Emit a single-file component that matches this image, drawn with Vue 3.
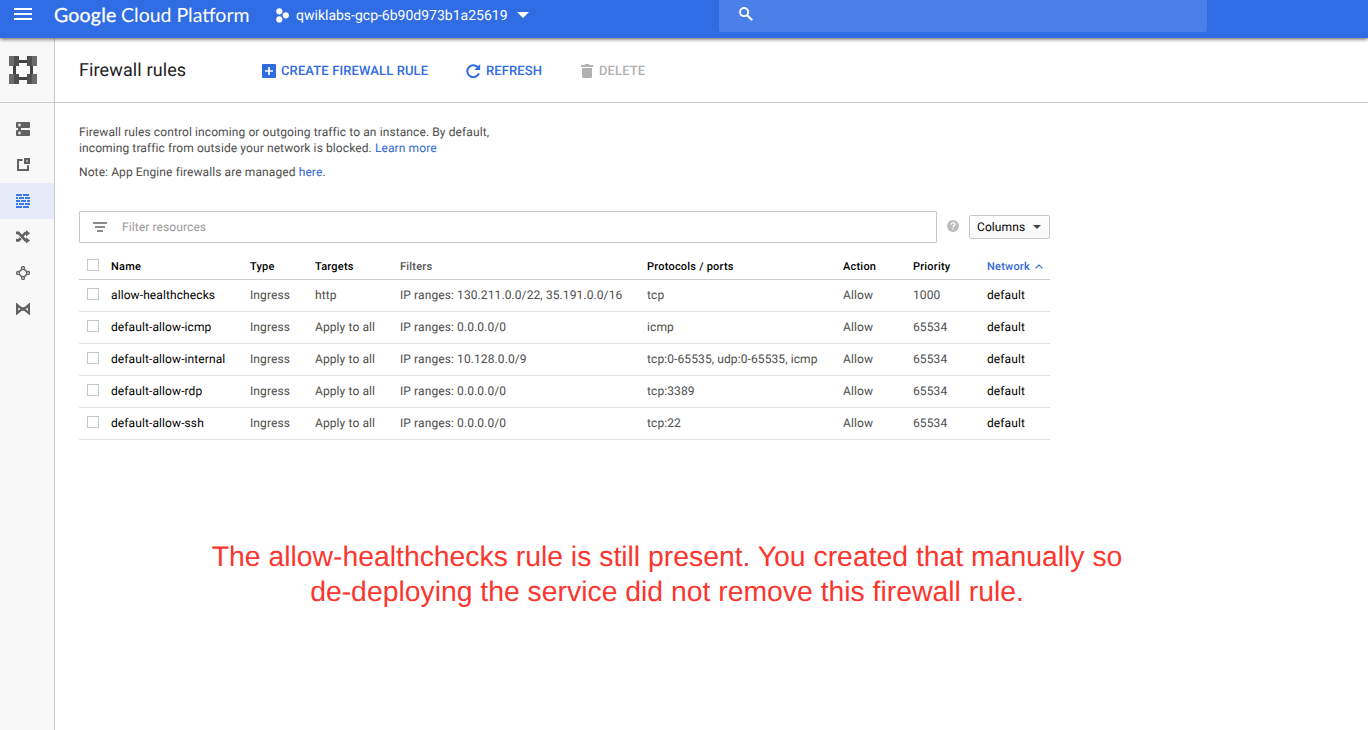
<script setup>
const columns = [
  { label: 'Name' },
  { label: 'Type' },
  { label: 'Targets' },
  { label: 'Filters', muted: true },
  { label: 'Protocols / ports' },
  { label: 'Action' },
  { label: 'Priority' },
]
const rules = [
  { name: 'allow-healthchecks', targets: 'http', filters: 'IP ranges: 130.211.0.0/22, 35.191.0.0/16', ports: 'tcp', priority: 1000 },
  { name: 'default-allow-icmp', targets: 'Apply to all', filters: 'IP ranges: 0.0.0.0/0', ports: 'icmp', priority: 65534 },
  { name: 'default-allow-internal', targets: 'Apply to all', filters: 'IP ranges: 10.128.0.0/9', ports: 'tcp:0-65535, udp:0-65535, icmp', priority: 65534 },
  { name: 'default-allow-rdp', targets: 'Apply to all', filters: 'IP ranges: 0.0.0.0/0', ports: 'tcp:3389', priority: 65534 },
  { name: 'default-allow-ssh', targets: 'Apply to all', filters: 'IP ranges: 0.0.0.0/0', ports: 'tcp:22', priority: 65534 },
]
</script>

<template>
  <div class="page">
    <header class="topbar">
      <svg class="menu" width="18" height="12" viewBox="0 0 18 12" fill="#fff"><path d="M0 0h18v2H0zM0 5h18v2H0zM0 10h18v2H0z" /></svg>
      <div class="logo"><span class="logo-google">Google</span><span class="logo-rest">Cloud Platform</span></div>
      <div class="project">
        <svg width="14" height="15" viewBox="0 0 14 15" fill="#fff"><circle cx="4.3" cy="3.3" r="3.1" /><circle cx="10.8" cy="7.3" r="3.1" /><circle cx="4.3" cy="11.4" r="3.1" /></svg>
        <span class="project-name">qwiklabs-gcp-6b90d973b1a25619</span>
        <svg width="12" height="6" viewBox="0 0 12 6" fill="#fff"><path d="M0 0h12L6 6z" /></svg>
      </div>
      <div class="search">
        <svg width="14" height="14" viewBox="0 0 14 14" fill="none" stroke="#fff"><circle cx="5.1" cy="5.1" r="4.1" stroke-width="1.8" /><path d="M8.2 8.2l5 5" stroke-width="2.1" /></svg>
      </div>
    </header>

    <div class="body">
      <nav class="sidebar">
        <div class="product">
          <svg width="28" height="28" viewBox="0 0 28 28">
            <path d="M10 4h8v3h-8zM10 21h8v3h-8zM4 10h3v8H4zM21 10h3v8h-3z" fill="#424242" />
            <path d="M0 0h10v10H0zM18 0h10v10H18zM0 18h10v10H0zM18 18h10v10H18z" fill="#6b6b6b" />
            <path d="M5 0h5v10H5zM18 0h5v10h-5zM5 18h5v10H5zM18 18h5v10h-5z" fill="#505050" />
          </svg>
        </div>
        <div class="nav-items">
          <div class="nav-item">
            <svg width="14" height="14" viewBox="0 0 14 14">
              <path d="M1 0h12a1 1 0 0 1 1 1v4a1 1 0 0 1-1 1H1a1 1 0 0 1-1-1V1a1 1 0 0 1 1-1zM1 8h12a1 1 0 0 1 1 1v4a1 1 0 0 1-1 1H1a1 1 0 0 1-1-1V9a1 1 0 0 1 1-1z" fill="#616161" />
              <path d="M2 5h3v4H2z" fill="#616161" />
              <circle cx="3.5" cy="3" r="1.4" fill="#e8e8e8" /><circle cx="3.5" cy="11" r="1.4" fill="#e8e8e8" />
            </svg>
          </div>
          <div class="nav-item">
            <svg width="14" height="14" viewBox="0 0 14 14">
              <path d="M7 2H2v10h10V7" fill="none" stroke="#616161" stroke-width="2" />
              <path d="M8 0h6v6H8z" fill="#616161" /><path d="M10 2h2v2h-2z" fill="#aaa" /><path d="M6.5 0H8v7.5H6.5zM7 6h7v1.2H7z" fill="#f8f8f8" />
            </svg>
          </div>
          <div class="nav-item active">
            <svg width="14" height="14" viewBox="0 0 14 14" fill="#3b78e7">
              <path d="M0 0h6v2H0zM7 0h6v2H7zM0 3h2v2H0zM3 3h5v2H3zM9 3h5v2H9zM0 6h4v2H0zM5 6h5v2H5zM11 6h3v2h-3zM0 9h2v2H0zM3 9h5v2H3zM9 9h5v2H9zM0 12h6v2H0zM7 12h6v2H7z" />
            </svg>
          </div>
          <div class="nav-item">
            <svg width="14" height="14" viewBox="0 0 14 14">
              <path d="M0 2.8h2.5l7 7.6H11M0 10.4h2.5l2.2-2.2M6.7 5.6l2.6-2.6H11" fill="none" stroke="#616161" stroke-width="2.7" />
              <path d="M10 0l4 3.2-4 3.2zM10 7.2l4 3.2-4 3.2z" fill="#616161" />
            </svg>
          </div>
          <div class="nav-item">
            <svg width="14" height="14" viewBox="0 0 14 14" fill="none" stroke="#616161">
              <path d="M5.8 3.2L3.2 5.8M8.2 3.2l2.6 2.6M3.2 8.2l2.6 2.6M10.8 8.2l-2.6 2.6" stroke-width="1.5" />
              <circle cx="7" cy="2" r="1.5" stroke-width="1.3" /><circle cx="2" cy="7" r="1.5" stroke-width="1.3" /><circle cx="12" cy="7" r="1.5" stroke-width="1.3" /><circle cx="7" cy="12" r="1.5" stroke-width="1.3" />
            </svg>
          </div>
          <div class="nav-item">
            <svg width="14" height="12" viewBox="0 0 14 12">
              <path d="M1.1 1.8l4.9 4.2-4.9 4.2zM12.9 1.8L8 6l4.9 4.2z" fill="none" stroke="#616161" stroke-width="2.2" />
              <path d="M5 4.2h4v3.6H5z" fill="#616161" />
            </svg>
          </div>
        </div>
      </nav>

      <main class="main">
        <div class="toolbar">
          <h1>Firewall rules</h1>
          <div class="action create">
            <svg width="14" height="14" viewBox="0 0 14 14"><rect width="14" height="14" rx="1" fill="#2f6be2" /><path d="M3 7h8M7 3v8" stroke="#fff" stroke-width="1.7" /></svg>
            <span>CREATE FIREWALL RULE</span>
          </div>
          <div class="action refresh">
            <svg width="15" height="14" viewBox="0 0 15 14"><path d="M12.9 9.3A6 6 0 1 1 11.6 3" fill="none" stroke="#2f6be2" stroke-width="2" /><path d="M14.2 0v6H8.4z" fill="#2f6be2" /></svg>
            <span>REFRESH</span>
          </div>
          <div class="action delete">
            <svg width="12" height="14" viewBox="0 0 12 14" fill="#b1b1b1"><path d="M0 1h3.5l.8-1h3.4l.8 1H12v2H0zM1 4h10v8.5a1.5 1.5 0 0 1-1.5 1.5h-7A1.5 1.5 0 0 1 1 12.5z" /></svg>
            <span>DELETE</span>
          </div>
        </div>

        <div class="content">
          <p>Firewall rules control incoming or outgoing traffic to an instance. By default,<br />incoming traffic from outside your network is blocked. <a>Learn more</a></p>
          <p>Note: App Engine firewalls are managed <a>here</a>.</p>

          <div class="filter-row">
            <div class="filter">
              <svg width="14" height="10" viewBox="0 0 14 10" fill="#8a8a8a"><path d="M0 0h14v2H0zM2 4h10v2H2zM4 8h6v2H4z" /></svg>
              <span>Filter resources</span>
            </div>
            <svg class="help" width="12" height="12" viewBox="0 0 12 12"><circle cx="6" cy="6" r="6" fill="#bdbdbd" /><path d="M4.1 4.7c0-2.5 3.8-2.4 3.8-.2C7.9 5.8 6 5.9 6 7.5" fill="none" stroke="#fff" stroke-width="1.3" /><path d="M5.4 8.4h1.3v1.3H5.4z" fill="#fff" /></svg>
            <div class="columns-btn">
              <span>Columns</span>
              <svg width="8" height="4" viewBox="0 0 8 4" fill="#444"><path d="M0 0h8L4 4z" /></svg>
            </div>
          </div>

          <div class="table">
            <div class="row head">
              <i class="checkbox"></i>
              <span v-for="c in columns" :key="c.label" :class="{ muted: c.muted }">{{ c.label }}</span>
              <span class="sorted">Network<svg width="8" height="5" viewBox="0 0 8 5"><path d="M.6 4.4L4 1l3.4 3.4" fill="none" stroke="#3367d6" stroke-width="1.1" /></svg></span>
            </div>
            <div v-for="r in rules" :key="r.name" class="row">
              <i class="checkbox"></i>
              <span class="strong">{{ r.name }}</span>
              <span>Ingress</span>
              <span>{{ r.targets }}</span>
              <span>{{ r.filters }}</span>
              <span>{{ r.ports }}</span>
              <span>Allow</span>
              <span>{{ r.priority }}</span>
              <span class="strong">default</span>
            </div>
          </div>

          <div class="note">The allow-healthchecks rule is still present. You created that manually so<br />de-deploying the service did not remove this firewall rule.</div>
        </div>
      </main>
    </div>
  </div>
</template>

<style>
body { margin: 0; overflow: hidden; }
</style>

<style scoped>
.page { width: 1368px; height: 730px; overflow: hidden; display: flex; flex-direction: column; background: #fff; font-family: Roboto, sans-serif; font-size: 12px; color: #4d4d4d; letter-spacing: 0.1px; white-space: nowrap; text-rendering: geometricPrecision; }
svg { display: block; flex: none; }
.topbar { height: 38px; flex: none; display: flex; align-items: flex-start; background: #306ce3; color: #fff; box-shadow: 0 1px 4px rgba(0, 0, 0, 0.65); position: relative; }
.menu { margin: 8px 0 0 14px; }
.logo { display: flex; width: 221px; margin-left: 22px; font-family: Lato, sans-serif; font-size: 19.5px; line-height: 31px; letter-spacing: 0; }
.logo-google { width: 67px; letter-spacing: 0.2px; -webkit-text-stroke: 0.3px #fff; }
.project { display: flex; align-items: center; height: 30px; width: 444px; }
.project-name { margin: 0 10px 0 7px; width: 211px; font-size: 14px; letter-spacing: 0; line-height: 18px; padding-top: 2px; }
.search { width: 488px; height: 32px; box-sizing: border-box; padding: 7px 0 0 20px; background: #4a80e8; border-radius: 0 0 2px 2px; }
.body { flex: 1; display: flex; }
.sidebar { width: 54px; flex: none; background: #f8f8f8; border-right: 1px solid #ccc; }
.product { height: 64px; border-bottom: 1px solid #ccc; display: flex; justify-content: center; align-items: center; padding-right: 8px; }
.nav-items { padding-top: 8px; }
.nav-item { height: 36px; padding-right: 8px; display: flex; align-items: center; justify-content: center; }
.nav-item.active { background: #e6edf9; }
.toolbar { height: 64px; border-bottom: 1px solid #ccc; display: flex; align-items: center; padding-left: 24px; }
.main { flex: 1; }
h1 { margin: 0; width: 183px; font-size: 18px; font-weight: 400; color: #212121; letter-spacing: 0.12px; line-height: 24px; padding-top: 2px; }
.action { display: flex; align-items: center; font-size: 13px; font-weight: 500; letter-spacing: 0.12px; color: #306ce3; line-height: 16px; padding-top: 1px; }
.action span { padding-top: 2px; }
.create { gap: 5px; width: 204px; }
.refresh { gap: 5px; width: 115px; }
.delete { gap: 6px; color: #b1b1b1; }
.content { padding: 21px 0 0 24px; width: 971px; }
p { margin: 0 0 8px; line-height: 16px; }
a { color: #3367d6; }
.filter-row { display: flex; align-items: center; margin-top: 31px; }
.filter { width: 858px; height: 32px; box-sizing: border-box; border: 1px solid #c8c8c8; border-radius: 1px; display: flex; align-items: center; gap: 15px; padding-left: 13px; color: #999; }
.filter svg { margin-bottom: 1px; }
.help { margin: 0 10px 2px; }
.columns-btn { width: 81px; height: 24px; box-sizing: border-box; border: 1px solid #c8c8c8; border-radius: 2px; display: flex; align-items: center; justify-content: space-between; padding: 0 8px 0 7px; color: #000; background: linear-gradient(#fff, #f8f8f8); }
.table { margin-top: 10px; }
.row { display: grid; grid-template-columns: 32px 139px 65px 85px 247px 196px 70px 74px 63px; height: 31px; line-height: 31px; border-bottom: 1px solid #e3e3e3; }
.head { height: 26px; line-height: 27px; font-size: 11px; font-weight: 500; color: #000; border-color: #ccc; letter-spacing: 0.22px; }
.checkbox { width: 10px; height: 10px; border: 1px solid #c8c8c8; margin: 8px 0 0 8px; background: #fff; }
.head .checkbox { margin-top: 6px; }
.muted { color: #555; }
.strong { color: #000; }
.sorted { display: flex; align-items: center; gap: 5px; color: #3367d6; }
.note { margin: 100px 0 0; width: 1176px; text-align: center; font-family: "Liberation Sans", sans-serif; font-size: 28.35px; line-height: 35px; letter-spacing: 0; color: #fc362f; }
</style>
